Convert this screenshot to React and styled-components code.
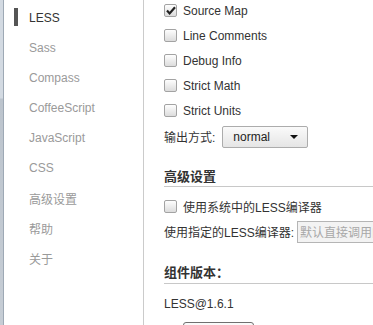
import React from "react";
import styled, { createGlobalStyle } from "styled-components";

const Global = createGlobalStyle`
  html, body { margin: 0; padding: 0; background: #fff; }
  body { font-family: "Liberation Sans", "Noto Sans CJK SC", sans-serif; font-size: 12px; color: #333; }
`;

const Frame = styled.div`
  display: flex;
  width: 373px;
  height: 325px;
  overflow: hidden;
  background: #fff;
`;

const EdgeStrip = styled.div`
  flex: 0 0 3px;
  background: linear-gradient(to bottom, #d3dae2 0, #d3dae2 98px, #bcc4cd 99px, #c6cdd5 100%);
  border-right: 1px solid #9ea9b5;
`;

const Sidebar = styled.nav`
  flex: 0 0 140px;
  border-right: 1px solid #cbcbcb;
  padding-top: 3px;
  box-sizing: border-box;
`;

const NavItem = styled.div`
  display: flex;
  align-items: center;
  height: 30px;
  padding-left: 10px;
  color: ${(p) => (p.$active ? "#333" : "#9a9a9a")};
  font-size: 12px;
  &::before {
    content: "";
    width: 4px;
    height: 18px;
    margin-right: 11px;
    margin-top: -2px;
    background: ${(p) => (p.$active ? "#555" : "transparent")};
  }
`;

const Content = styled.main`
  flex: 1 0 auto;
  padding-left: 20px;
  margin-top: -2px;
  white-space: nowrap;
`;

const Row = styled.div`
  display: flex;
  align-items: center;
  height: ${(p) => p.$h || 25}px;
  gap: ${(p) => p.$gap ?? 6}px;
  margin-top: ${(p) => p.$mt || 0}px;
`;

const Box = styled.span`
  width: 11px;
  height: 11px;
  border: 1px solid #a3a3a3;
  border-radius: 2px;
  background: linear-gradient(to bottom, #fefefe, #dcdcdc);
  display: inline-flex;
  align-items: center;
  justify-content: center;
  flex: 0 0 auto;
`;

const SelectBox = styled.div`
  display: flex;
  align-items: center;
  justify-content: space-between;
  box-sizing: border-box;
  width: 86px;
  height: 22px;
  margin-left: 7px;
  border: 1px solid #acacac;
  border-radius: 2px;
  background: linear-gradient(to bottom, #fafafa, #e5e5e5);
  padding: 0 9px 0 10px;
  font-size: 12px;
  color: #222;
`;

const Arrow = styled.span`
  width: 0;
  height: 0;
  border-left: 4px solid transparent;
  border-right: 4px solid transparent;
  border-top: 4px solid #111;
`;

const SectionTitle = styled.div`
  display: flex;
  align-items: center;
  height: ${(p) => p.$h || 21}px;
  margin-top: ${(p) => p.$mt || 0}px;
  font-size: 13px;
  font-weight: bold;
  color: #333;
  border-bottom: 1px solid #c8c8c8;
  width: 260px;
`;

const TextInput = styled.div`
  width: 150px;
  height: 22px;
  box-sizing: border-box;
  border: 1px solid #b5b5b5;
  background: #f3f3f3;
  color: #a8a8a8;
  font-size: 12px;
  display: flex;
  align-items: center;
  padding-left: 2px;
  margin-left: 3px;
`;

const Button = styled.div`
  width: 71px;
  height: 22px;
  box-sizing: border-box;
  margin-left: 19px;
  margin-top: 6px;
  border: 1px solid #707070;
  border-radius: 3px;
  background: linear-gradient(to bottom, #fbfbfb, #e6e6e6);
`;

const Check = () => (
  <svg width="10" height="9" viewBox="0 0 10 9">
    <path d="M1 4.6 L3.6 7.4 L9 1.2" fill="none" stroke="#222" strokeWidth="2.2" />
  </svg>
);

const CheckRow = ({ checked, children, ...rest }) => (
  <Row {...rest}>
    <Box>{checked && <Check />}</Box>
    <span>{children}</span>
  </Row>
);

const nav = ["LESS", "Sass", "Compass", "CoffeeScript", "JavaScript", "CSS", "高级设置", "帮助", "关于"];

export default function App() {
  return (
    <>
      <Global />
      <Frame>
        <EdgeStrip />
        <Sidebar>
          {nav.map((n, i) => (
            <NavItem key={n} $active={i === 0}>{n}</NavItem>
          ))}
        </Sidebar>
        <Content>
          <CheckRow checked>Source Map</CheckRow>
          <CheckRow>Line Comments</CheckRow>
          <CheckRow>Debug Info</CheckRow>
          <CheckRow>Strict Math</CheckRow>
          <CheckRow>Strict Units</CheckRow>
          <Row $h={27} $gap={0}>
            <span>输出方式:</span>
            <SelectBox>
              <span>normal</span>
              <Arrow />
            </SelectBox>
          </Row>
          <SectionTitle $mt={15}>高级设置</SectionTitle>
          <CheckRow $mt={7}>使用系统中的LESS编译器</CheckRow>
          <Row $gap={0}>
            <span>使用指定的LESS编译器:</span>
            <TextInput>默认直接调用内置编译器</TextInput>
          </Row>
          <SectionTitle $mt={15} $h={24}>组件版本：</SectionTitle>
          <Row $mt={7}>LESS@1.6.1</Row>
          <Button />
        </Content>
      </Frame>
    </>
  );
}
